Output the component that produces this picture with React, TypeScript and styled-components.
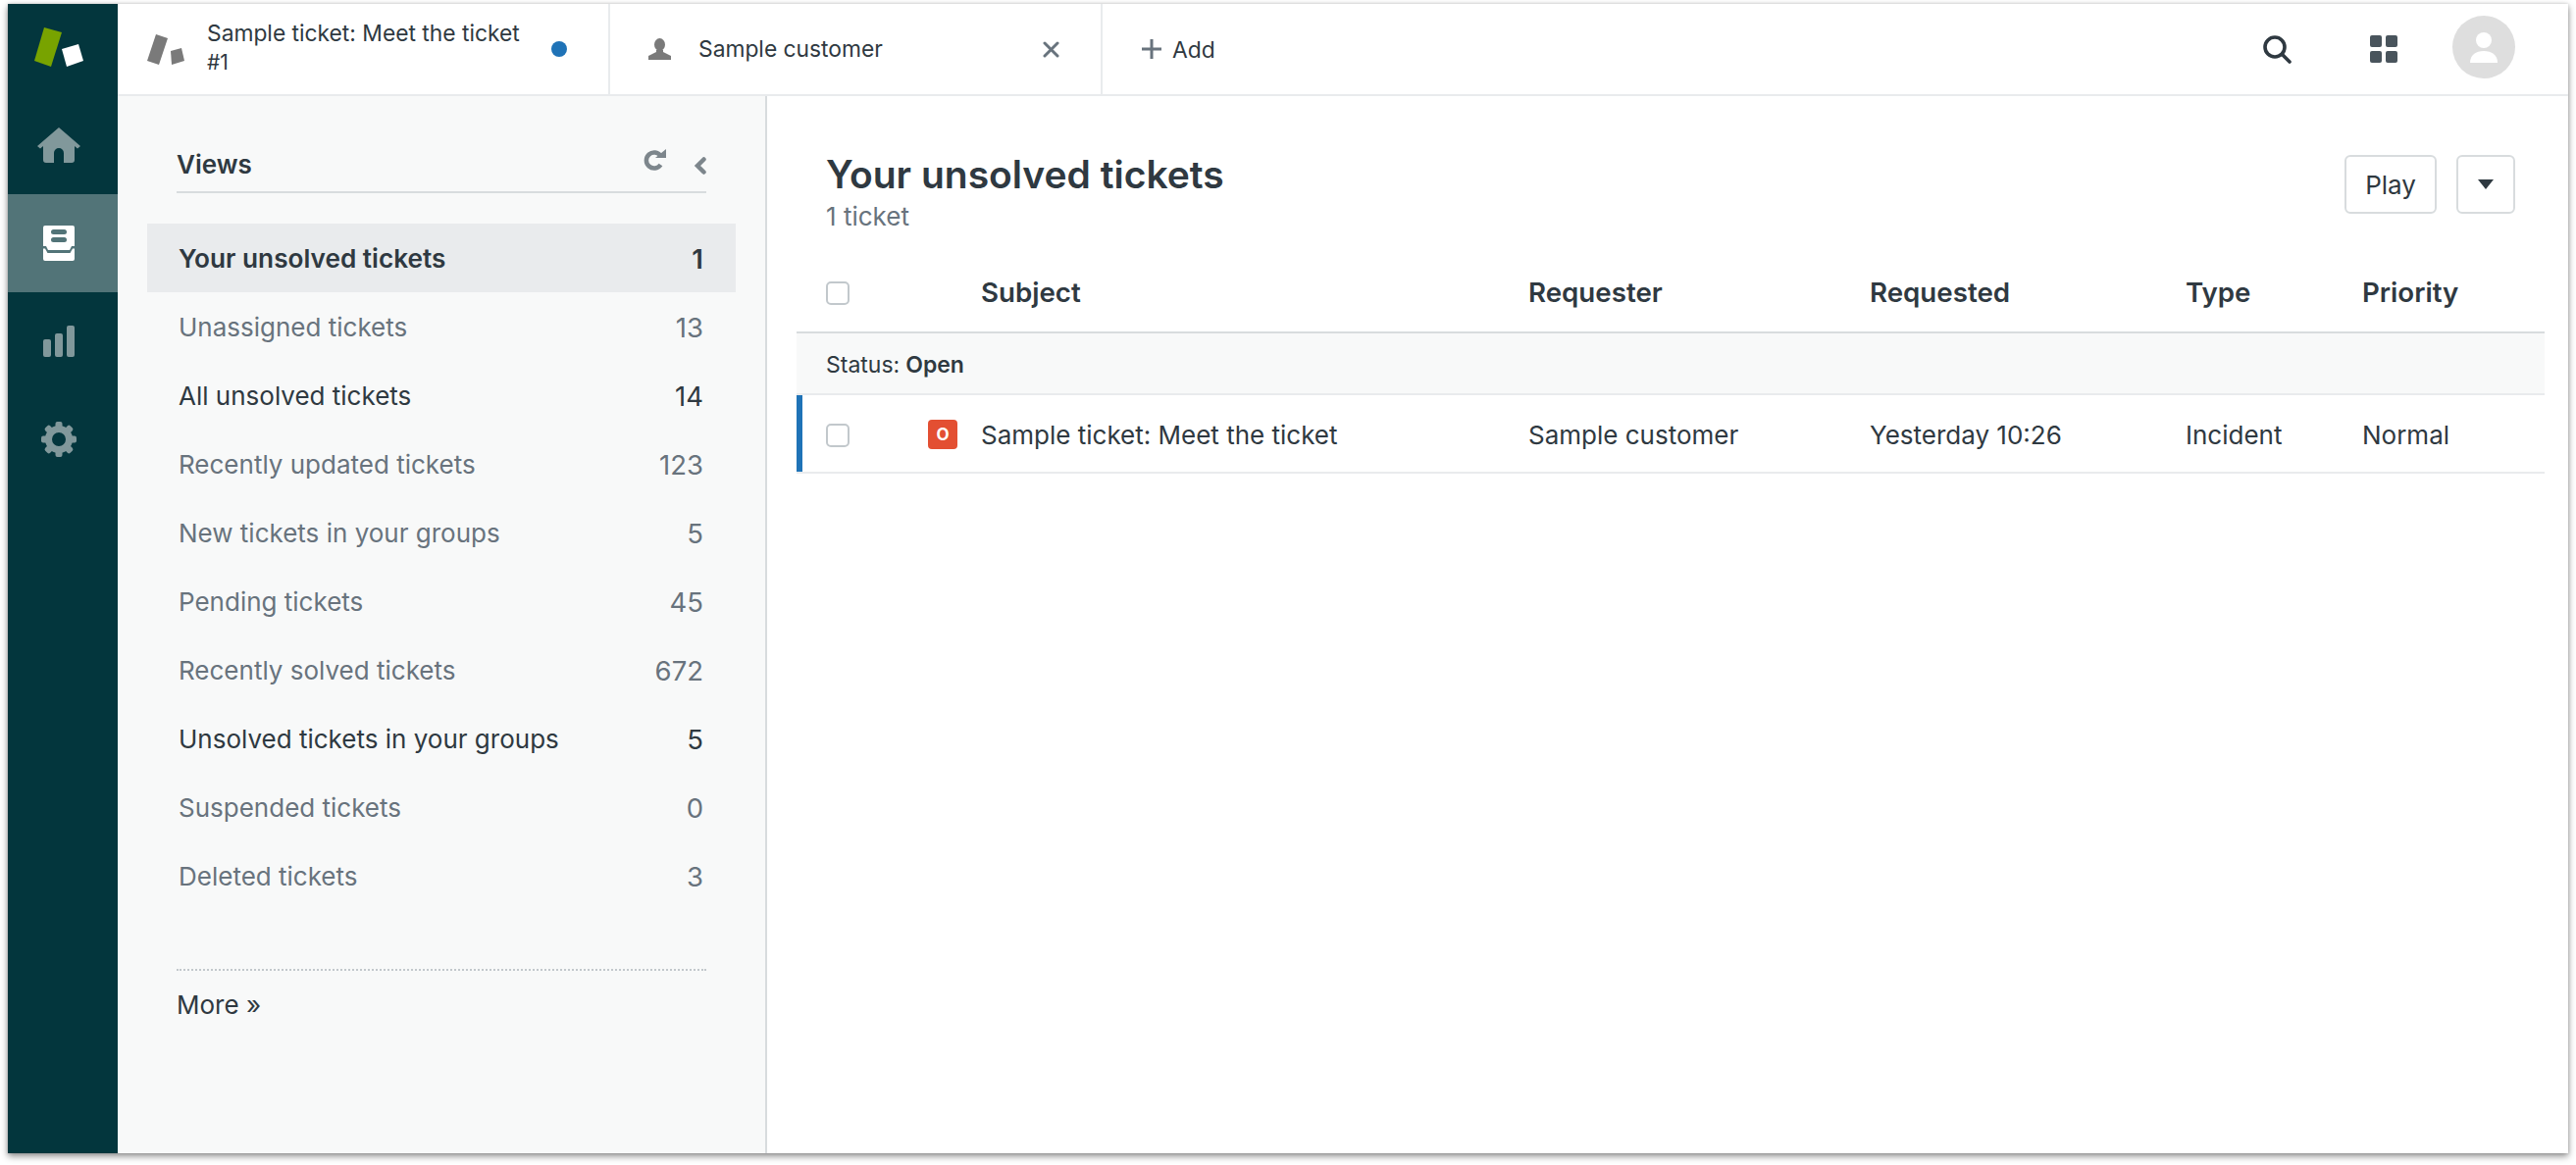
import React from 'react';
import styled, { createGlobalStyle } from 'styled-components';

const GlobalStyle = createGlobalStyle`
  html, body {
    margin: 0;
    padding: 0;
    background: #fff;
  }
  body {
    font-family: Inter, "Noto Sans", sans-serif;
    color: #2f3941;
  }
  * {
    box-sizing: border-box;
  }
`;

const Page = styled.div`
  width: 2626px;
  height: 1188px;
  padding: 4px 8px 12px;
  overflow: hidden;
`;

const AppWindow = styled.div`
  display: flex;
  height: 1172px;
  background: #fff;
  box-shadow: 0 3px 7px rgba(0, 0, 0, 0.45), 0 0 3px rgba(0, 0, 0, 0.15);
`;

const Rail = styled.nav`
  display: flex;
  flex-direction: column;
  flex: 0 0 112px;
  background: #03363d;
`;

const RailLogo = styled.div`
  display: flex;
  align-items: center;
  justify-content: center;
  height: 94px;
  padding: 0 8px 6px 0;
`;

const RailItem = styled.div<{ $active?: boolean }>`
  display: flex;
  align-items: center;
  justify-content: center;
  height: 100px;
  padding-right: 8px;
  background: ${p => (p.$active ? '#527478' : 'transparent')};
  color: ${p => (p.$active ? '#fff' : '#81989b')};
`;

const Main = styled.div`
  display: flex;
  flex-direction: column;
  flex: 1;
  min-width: 0;
`;

const TopBar = styled.header`
  display: flex;
  align-items: stretch;
  flex: 0 0 94px;
  border-bottom: 2px solid #e9ebed;
`;

const Tab = styled.div<{ $closable?: boolean }>`
  display: flex;
  align-items: center;
  flex: 0 0 502px;
  padding: 0 42px 0 ${p => (p.$closable ? '39px' : '30px')};
  border-right: 2px solid #e9ebed;
  font-size: 22.8px;
`;

const TabTitle = styled.div<{ $two?: boolean }>`
  flex: 1;
  line-height: 30px;
  margin-left: ${p => (p.$two ? '23px' : '28px')};
  margin-top: ${p => (p.$two ? '-2px' : '0')};
  color: #2f3941;
`;

const TabNumber = styled.div`
  font-size: 21px;
`;

const UnreadDot = styled.span`
  flex: 0 0 16px;
  height: 16px;
  border-radius: 50%;
  background: #1f73b7;
`;

const AddButton = styled.div`
  display: flex;
  align-items: center;
  gap: 11px;
  margin-left: 40px;
  font-size: 22.8px;
`;

const TopActions = styled.div`
  display: flex;
  align-items: center;
  margin-left: auto;
  padding-right: 54px;
`;

const SearchSlot = styled.div`
  display: flex;
  margin-right: 80px;
`;

const GridSlot = styled.div`
  display: flex;
  margin-right: 56px;
`;

const Avatar = styled.div`
  display: flex;
  align-items: center;
  justify-content: center;
  width: 64px;
  height: 64px;
  margin-top: -4px;
  border-radius: 50%;
  background: #dedede;
`;

const Content = styled.div`
  display: flex;
  flex: 1;
  min-height: 0;
`;

const Sidebar = styled.aside`
  flex: 0 0 660px;
  padding: 0 30px;
  background: #f8f9f9;
  border-right: 2px solid #d8dcde;
`;

const SidebarHead = styled.div`
  display: flex;
  align-items: center;
  gap: 28px;
  height: 69px;
  margin: 30px 30px 31px;
  padding-top: 2px;
  border-bottom: 2px solid #d8dcde;
`;

const SidebarTitle = styled.div`
  flex: 1;
  padding-top: 10px;
  font-size: 26px;
  font-weight: 600;
`;

const CollapseSlot = styled.span`
  display: flex;
  padding-top: 12px;
`;

const ViewRow = styled.div<{ $selected?: boolean; $muted?: boolean }>`
  display: flex;
  align-items: center;
  justify-content: space-between;
  width: 600px;
  height: 70px;
  padding: 0 33px 0 32px;
  font-size: ${p => (p.$selected ? '26.2px' : '26px')};
  font-weight: ${p => (p.$selected ? 600 : 400)};
  color: ${p => (p.$muted ? '#68737d' : '#2f3941')};
  background: ${p => (p.$selected ? '#e9ebed' : 'transparent')};
`;

const ViewCount = styled.span`
  padding-top: 2px;
  font-size: 27.5px;
`;

const MoreLink = styled.div`
  margin: 60px 30px 0;
  padding-top: 17px;
  border-top: 2px dotted #c2c8cc;
  font-size: 26px;
  line-height: 36px;
`;

const Panel = styled.section`
  flex: 1;
  min-width: 0;
  padding: 0 24px 0 30px;
`;

const PanelHead = styled.div`
  display: flex;
  align-items: flex-start;
  justify-content: space-between;
  height: 160px;
  padding: 58px 30px 0 30px;
`;

const PanelTitle = styled.h1`
  margin: 0;
  font-size: 39px;
  line-height: 44px;
  font-weight: 600;
`;

const PanelSub = styled.div`
  margin-top: 5px;
  font-size: 26px;
  line-height: 32px;
  color: #68737d;
`;

const PanelActions = styled.div`
  display: flex;
  gap: 20px;
  margin-top: 2px;
`;

const OutlineButton = styled.button<{ $square?: boolean }>`
  display: flex;
  align-items: center;
  justify-content: center;
  width: ${p => (p.$square ? '60px' : '94px')};
  height: 60px;
  padding: 0;
  background: #fff;
  border: 2px solid #d8dcde;
  border-radius: 6px;
  font-family: inherit;
  font-size: 26px;
  color: #2f3941;
`;

const TableRow = styled.div`
  display: grid;
  grid-template-columns: 134px 54px 558px 348px 322px 180px 1fr;
  align-items: center;
`;

const HeadRow = styled(TableRow)`
  height: 82px;
  border-bottom: 2px solid #d8dcde;
  font-size: 27.7px;
  font-weight: 600;
`;

const GroupRow = styled.div`
  display: flex;
  align-items: center;
  height: 63px;
  padding: 2px 0 0 30px;
  background: #f8f9f9;
  border-bottom: 2px solid #e9ebed;
  font-size: 23px;
`;

const GroupValue = styled.strong`
  margin-left: 6px;
  font-weight: 600;
`;

const TicketRow = styled(TableRow)`
  height: 80px;
  padding-top: 2px;
  border-bottom: 2px solid #e9ebed;
  font-size: 26px;
  box-shadow: inset 6px 0 0 #1f73b7;
`;

const CheckCell = styled.div`
  padding: 2px 0 0 30px;
`;

const CheckBox = styled.span`
  display: block;
  width: 24px;
  height: 24px;
  background: #fff;
  border: 2px solid #c2c8cc;
  border-radius: 5px;
`;

const StatusBadge = styled.span`
  display: flex;
  align-items: center;
  justify-content: center;
  width: 30px;
  height: 30px;
  border-radius: 4px;
  background: #e34f32;
  color: #fff;
  font-size: 17px;
  font-weight: 700;
`;

const BrandLogo = () => (
  <svg width="50" height="40" viewBox="0 0 50 40">
    <polygon points="10,0 28,5 17,40 0,34" fill="#78a300" />
    <polygon points="28,22 45,17 50,34 33,40" fill="#fff" />
  </svg>
);

const TabLogo = () => (
  <svg width="38" height="31" viewBox="0 0 38 31" fill="#7a7a7a">
    <polygon points="9,0 21,4 12,31 0,27" />
    <polygon points="24,17 35,14 38,27 25,31" />
  </svg>
);

const HomeIcon = () => (
  <svg width="44" height="36" viewBox="0 0 44 36" fill="currentColor">
    <path d="M22 0 L44 19 L41 21.5 L38 19 V33 a3 3 0 0 1 -3 3 H27 V26 a5 5 0 0 0 -10 0 V36 H9 a3 3 0 0 1 -3 -3 V19 L3 21.5 L0 19 Z" />
  </svg>
);

const TicketsIcon = () => (
  <svg width="32" height="36" viewBox="0 0 32 36">
    <path fill="currentColor" d="M2 0 H30 a2 2 0 0 1 2 2 V21 H29 L27 25 H5 L3 21 H0 V2 a2 2 0 0 1 2 -2 Z" />
    <path
      fill="currentColor"
      d="M0 23.5 H2 L4.5 28 H27.5 L30 23.5 H32 V34 a2 2 0 0 1 -2 2 H2 a2 2 0 0 1 -2 -2 Z"
    />
    <rect x="8" y="4" width="16" height="5" rx="2.5" fill="#527478" />
    <rect x="8" y="12" width="16" height="5" rx="2.5" fill="#527478" />
  </svg>
);

const ChartIcon = () => (
  <svg width="32" height="32" viewBox="0 0 32 32" fill="currentColor">
    <rect x="0" y="14" width="8" height="18" rx="2" />
    <rect x="12" y="8" width="8" height="24" rx="2" />
    <rect x="24" y="0" width="8" height="32" rx="2" />
  </svg>
);

const GearIcon = () => (
  <svg width="36" height="36" viewBox="0 0 36 36">
    <g fill="currentColor">
      {[0, 45, 90, 135, 180, 225, 270, 315].map(deg => (
        <rect key={deg} x="14.5" y="0" width="7" height="9" rx="2" transform={`rotate(${deg} 18 18)`} />
      ))}
    </g>
    <circle cx="18" cy="18" r="10.5" fill="none" stroke="currentColor" strokeWidth="7" />
  </svg>
);

const PersonIcon = () => (
  <svg width="23" height="22" viewBox="0 0 23 22" fill="#7a7a7a">
    <ellipse cx="11.5" cy="6.5" rx="5.5" ry="6.5" />
    <path d="M8 12 H15 V14 L23 18 V22 H0 V18 L8 14 Z" />
  </svg>
);

const CloseIcon = () => (
  <svg width="17" height="17" viewBox="0 0 17 17" stroke="#68737d" strokeWidth="3" strokeLinecap="round">
    <path d="M2 2 L15 15 M15 2 L2 15" />
  </svg>
);

const PlusIcon = () => (
  <svg width="20" height="20" viewBox="0 0 20 20" stroke="#68737d" strokeWidth="3">
    <path d="M10 0 V20 M0 10 H20" />
  </svg>
);

const SearchIcon = () => (
  <svg width="29" height="29" viewBox="0 0 29 29" fill="none" stroke="#2f3941" strokeWidth="3.6" strokeLinecap="round">
    <circle cx="12" cy="12" r="10" />
    <path d="M19.5 19.5 L27 27" />
  </svg>
);

const AppsIcon = () => (
  <svg width="28" height="28" viewBox="0 0 28 28" fill="#49545c">
    <rect x="0" y="0" width="12" height="12" rx="2" />
    <rect x="16" y="0" width="12" height="12" rx="2" />
    <rect x="0" y="16" width="12" height="12" rx="2" />
    <rect x="16" y="16" width="12" height="12" rx="2" />
  </svg>
);

const AvatarIcon = () => (
  <svg width="28" height="31" viewBox="0 0 28 31" fill="#fff">
    <circle cx="14" cy="8" r="8" />
    <path d="M0 31 C0 23 6 19 14 19 C22 19 28 23 28 31 Z" />
  </svg>
);

const RefreshIcon = () => (
  <svg width="23" height="22" viewBox="0 0 23 22">
    <path d="M17.5 7 A8 8 0 1 0 17.5 16" fill="none" stroke="#7d868c" strokeWidth="4.5" />
    <polygon points="12,9 23,9 23,0" fill="#7d868c" />
  </svg>
);

const ChevronIcon = () => (
  <svg width="13" height="18" viewBox="0 0 13 18" fill="none" stroke="#7d868c" strokeWidth="4.5" strokeLinecap="round">
    <path d="M10.5 2.5 L4 9 L10.5 15.5" />
  </svg>
);

const CaretIcon = () => (
  <svg width="16" height="10" viewBox="0 0 16 10" fill="#2f3941">
    <polygon points="0,0 16,0 8,10" />
  </svg>
);

const views = [
  { name: 'Your unsolved tickets', count: 1, selected: true },
  { name: 'Unassigned tickets', count: 13, muted: true },
  { name: 'All unsolved tickets', count: 14 },
  { name: 'Recently updated tickets', count: 123, muted: true },
  { name: 'New tickets in your groups', count: 5, muted: true },
  { name: 'Pending tickets', count: 45, muted: true },
  { name: 'Recently solved tickets', count: 672, muted: true },
  { name: 'Unsolved tickets in your groups', count: 5 },
  { name: 'Suspended tickets', count: 0, muted: true },
  { name: 'Deleted tickets', count: 3, muted: true },
];

export default function App() {
  return (
    <Page>
      <GlobalStyle />
      <AppWindow>
        <Rail>
          <RailLogo>
            <BrandLogo />
          </RailLogo>
          <RailItem>
            <HomeIcon />
          </RailItem>
          <RailItem $active>
            <TicketsIcon />
          </RailItem>
          <RailItem>
            <ChartIcon />
          </RailItem>
          <RailItem>
            <GearIcon />
          </RailItem>
        </Rail>
        <Main>
          <TopBar>
            <Tab>
              <TabLogo />
              <TabTitle $two>
                Sample ticket: Meet the ticket
                <TabNumber>#1</TabNumber>
              </TabTitle>
              <UnreadDot />
            </Tab>
            <Tab $closable>
              <PersonIcon />
              <TabTitle>Sample customer</TabTitle>
              <CloseIcon />
            </Tab>
            <AddButton>
              <PlusIcon />
              Add
            </AddButton>
            <TopActions>
              <SearchSlot>
                <SearchIcon />
              </SearchSlot>
              <GridSlot>
                <AppsIcon />
              </GridSlot>
              <Avatar>
                <AvatarIcon />
              </Avatar>
            </TopActions>
          </TopBar>
          <Content>
            <Sidebar>
              <SidebarHead>
                <SidebarTitle>Views</SidebarTitle>
                <RefreshIcon />
                <CollapseSlot>
                  <ChevronIcon />
                </CollapseSlot>
              </SidebarHead>
              {views.map(v => (
                <ViewRow key={v.name} $selected={v.selected} $muted={v.muted}>
                  <span>{v.name}</span>
                  <ViewCount>{v.count}</ViewCount>
                </ViewRow>
              ))}
              <MoreLink>More »</MoreLink>
            </Sidebar>
            <Panel>
              <PanelHead>
                <div>
                  <PanelTitle>Your unsolved tickets</PanelTitle>
                  <PanelSub>1 ticket</PanelSub>
                </div>
                <PanelActions>
                  <OutlineButton>Play</OutlineButton>
                  <OutlineButton $square>
                    <CaretIcon />
                  </OutlineButton>
                </PanelActions>
              </PanelHead>
              <HeadRow>
                <CheckCell>
                  <CheckBox />
                </CheckCell>
                <span />
                <span>Subject</span>
                <span>Requester</span>
                <span>Requested</span>
                <span>Type</span>
                <span>Priority</span>
              </HeadRow>
              <GroupRow>
                Status:<GroupValue>Open</GroupValue>
              </GroupRow>
              <TicketRow>
                <CheckCell>
                  <CheckBox />
                </CheckCell>
                <StatusBadge>O</StatusBadge>
                <span>Sample ticket: Meet the ticket</span>
                <span>Sample customer</span>
                <span>Yesterday 10:26</span>
                <span>Incident</span>
                <span>Normal</span>
              </TicketRow>
            </Panel>
          </Content>
        </Main>
      </AppWindow>
    </Page>
  );
}
